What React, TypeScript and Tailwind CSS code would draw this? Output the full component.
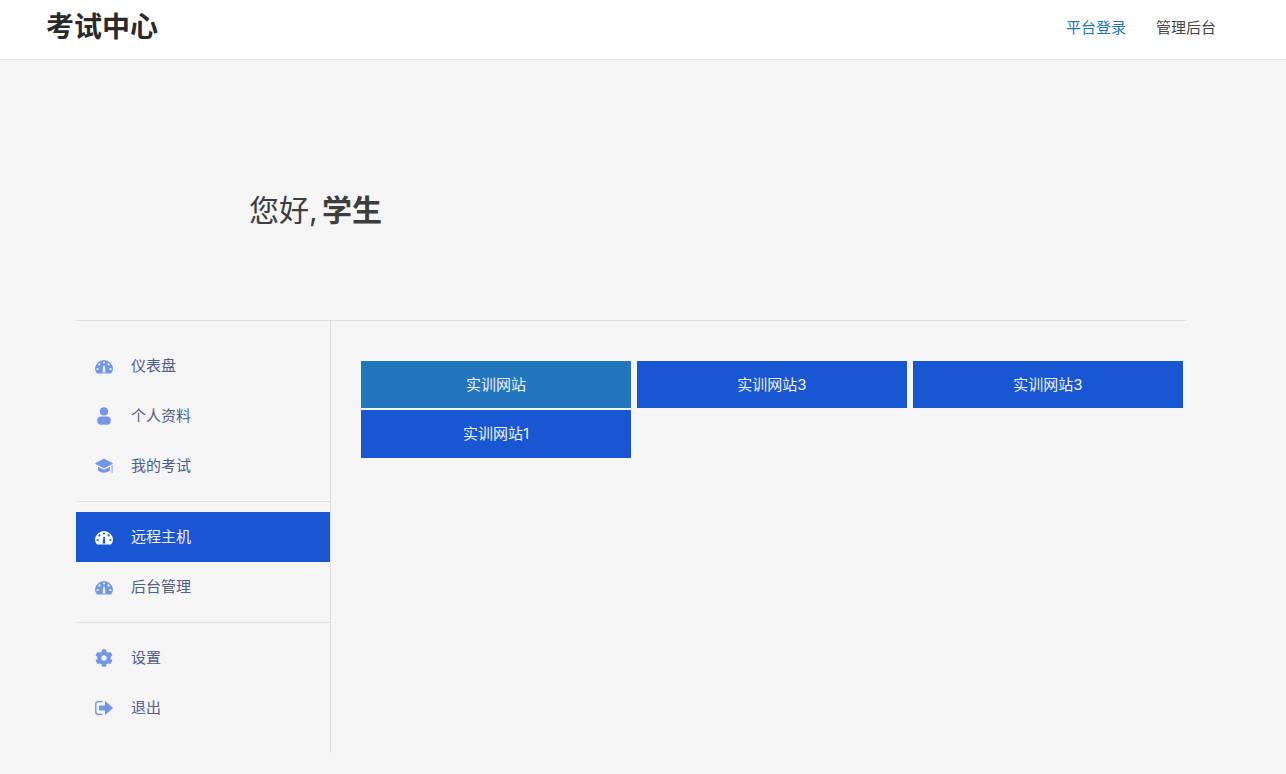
import React from 'react';
import { FaCog } from 'react-icons/fa';

const FONT = "font-['Inter','Noto_Sans_CJK_SC',sans-serif]";

// these differ too much from the icon pack, so they are drawn here
const GaugeIcon = ({ className }: { className?: string }) => (
  <svg viewBox="0 0 18 18" fill="currentColor" fillRule="evenodd" className={className}>
    <path d="M2 16.5Q0 14.5 0 12A9 9 0 0 1 18 12Q18 14.5 16 16.5Z M7.9 5.5a1.1 1.1 0 1 0 2.2 0a1.1 1.1 0 1 0 -2.2 0Z M3.3 7.4a1.1 1.1 0 1 0 2.2 0a1.1 1.1 0 1 0 -2.2 0Z M12.5 7.4a1.1 1.1 0 1 0 2.2 0a1.1 1.1 0 1 0 -2.2 0Z M1.5 12a1.1 1.1 0 1 0 2.2 0a1.1 1.1 0 1 0 -2.2 0Z M14.3 12a1.1 1.1 0 1 0 2.2 0a1.1 1.1 0 1 0 -2.2 0Z M7.6 15.5L8.4 8.8H9.8L10.4 15.5Z" />
  </svg>
);

const UserIcon = ({ className }: { className?: string }) => (
  <svg viewBox="0 0 18 18" fill="currentColor" className={className}>
    <circle cx="9" cy="4.4" r="4.1" />
    <rect x="2.2" y="9.6" width="13.6" height="8.2" rx="4" />
  </svg>
);

const CapIcon = ({ className }: { className?: string }) => (
  <svg viewBox="0 0 18 18" fill="currentColor" className={className}>
    <path d="M8.2 2 0.4 6 Q0 6.5 0.4 7 L8.2 11 Q9 11.3 9.8 11 L17.6 7 Q18 6.5 17.6 6 L9.8 2 Q9 1.7 8.2 2Z" />
    <path d="M3 9.8 8 12.3 Q9 12.7 10 12.3 L15 9.8 V13.6 Q9 18 3 13.6Z" />
    <rect x="16.6" y="8" width="0.9" height="8" />
  </svg>
);

const LogoutIcon = ({ className }: { className?: string }) => (
  <svg viewBox="0 0 18 18" fill="currentColor" className={className}>
    <path d="M7 2.6H3.2Q0.8 2.6 0.8 5V13Q0.8 15.4 3.2 15.4H7" fill="none" stroke="currentColor" strokeWidth="1.4" strokeLinecap="round" />
    <path d="M4.8 6.4H10V2.8Q10 2 10.8 2.6L17.6 8.4Q18 9 17.6 9.6L10.8 15.4Q10 16 10 15.2V11.6H4.8Q4 11.6 4 10.8V7.2Q4 6.4 4.8 6.4Z" />
  </svg>
);

type NavItem = { label: string; icon: React.ComponentType<{ className?: string }>; active?: boolean };

const NAV_GROUPS: NavItem[][] = [
  [
    { label: '仪表盘', icon: GaugeIcon },
    { label: '个人资料', icon: UserIcon },
    { label: '我的考试', icon: CapIcon },
  ],
  [
    { label: '远程主机', icon: GaugeIcon, active: true },
    { label: '后台管理', icon: GaugeIcon },
  ],
  [
    { label: '设置', icon: FaCog },
    { label: '退出', icon: LogoutIcon },
  ],
];

const SITES = [
  { label: '实训网站', color: 'bg-[#2176bd]' },
  { label: '实训网站3', color: 'bg-[#1957d2]' },
  { label: '实训网站3', color: 'bg-[#1957d2]' },
  { label: '实训网站1', color: 'bg-[#1957d2]' },
];

const App: React.FC = () => {
  return (
    <div className={`${FONT} min-h-screen bg-[#f5f5f5] text-[15px]`}>
      <header className="h-[60px] bg-white border-b border-[#e8e8e8] pl-[46px] pr-[70px] flex justify-between">
        <div className="text-[28px] leading-[54px] font-bold text-[#2a2a2a]">考试中心</div>
        <nav className="flex gap-[30px] leading-[56px]">
          <a className="text-[#2176bd]">平台登录</a>
          <a className="text-[#444]">管理后台</a>
        </nav>
      </header>

      <div className="pl-[249px] pt-[126px] h-[260px] text-[30px] leading-[48px] text-[#3d3d3d] [word-spacing:-4px]">
        您好, <strong className="font-semibold">学生</strong>
      </div>

      <div className="ml-[76px] w-[1110px] flex border-t border-[#dedfe3]">
        <aside className="w-[255px] h-[432px] border-r border-[#dedfe3] py-[20px]">
          {NAV_GROUPS.map((group, i) => (
            <div key={i} className={i > 0 ? 'border-t border-[#dedfe3] mt-[10px] pt-[10px]' : ''}>
              {group.map((item) => {
                const Icon = item.icon;
                return (
                  <div
                    key={item.label}
                    className={`h-[50px] flex items-center pl-[19px] ${item.active ? 'bg-[#1957d2] text-[#eef2fc]' : 'text-[#4f5d8a]'}`}
                  >
                    <Icon className={`w-[18px] h-[18px] ${item.active ? 'text-white' : 'text-[#7397e5]'}`} />
                    <span className="ml-[18px]">{item.label}</span>
                  </div>
                );
              })}
            </div>
          ))}
        </aside>

        <main className="flex-1 pl-[30px] pt-[40px]">
          <div className="flex flex-wrap gap-x-[6px]">
            {SITES.map((site, i) => (
              <div
                key={i}
                className={`w-[270px] ${i === 3 ? 'h-[48px] mt-[2px] pt-[1px]' : 'h-[47px] pt-[2px]'} ${site.color} flex items-center justify-center text-[#eef2fc]`}
              >
                {site.label}
              </div>
            ))}
          </div>
        </main>
      </div>
    </div>
  );
};

export default App;
